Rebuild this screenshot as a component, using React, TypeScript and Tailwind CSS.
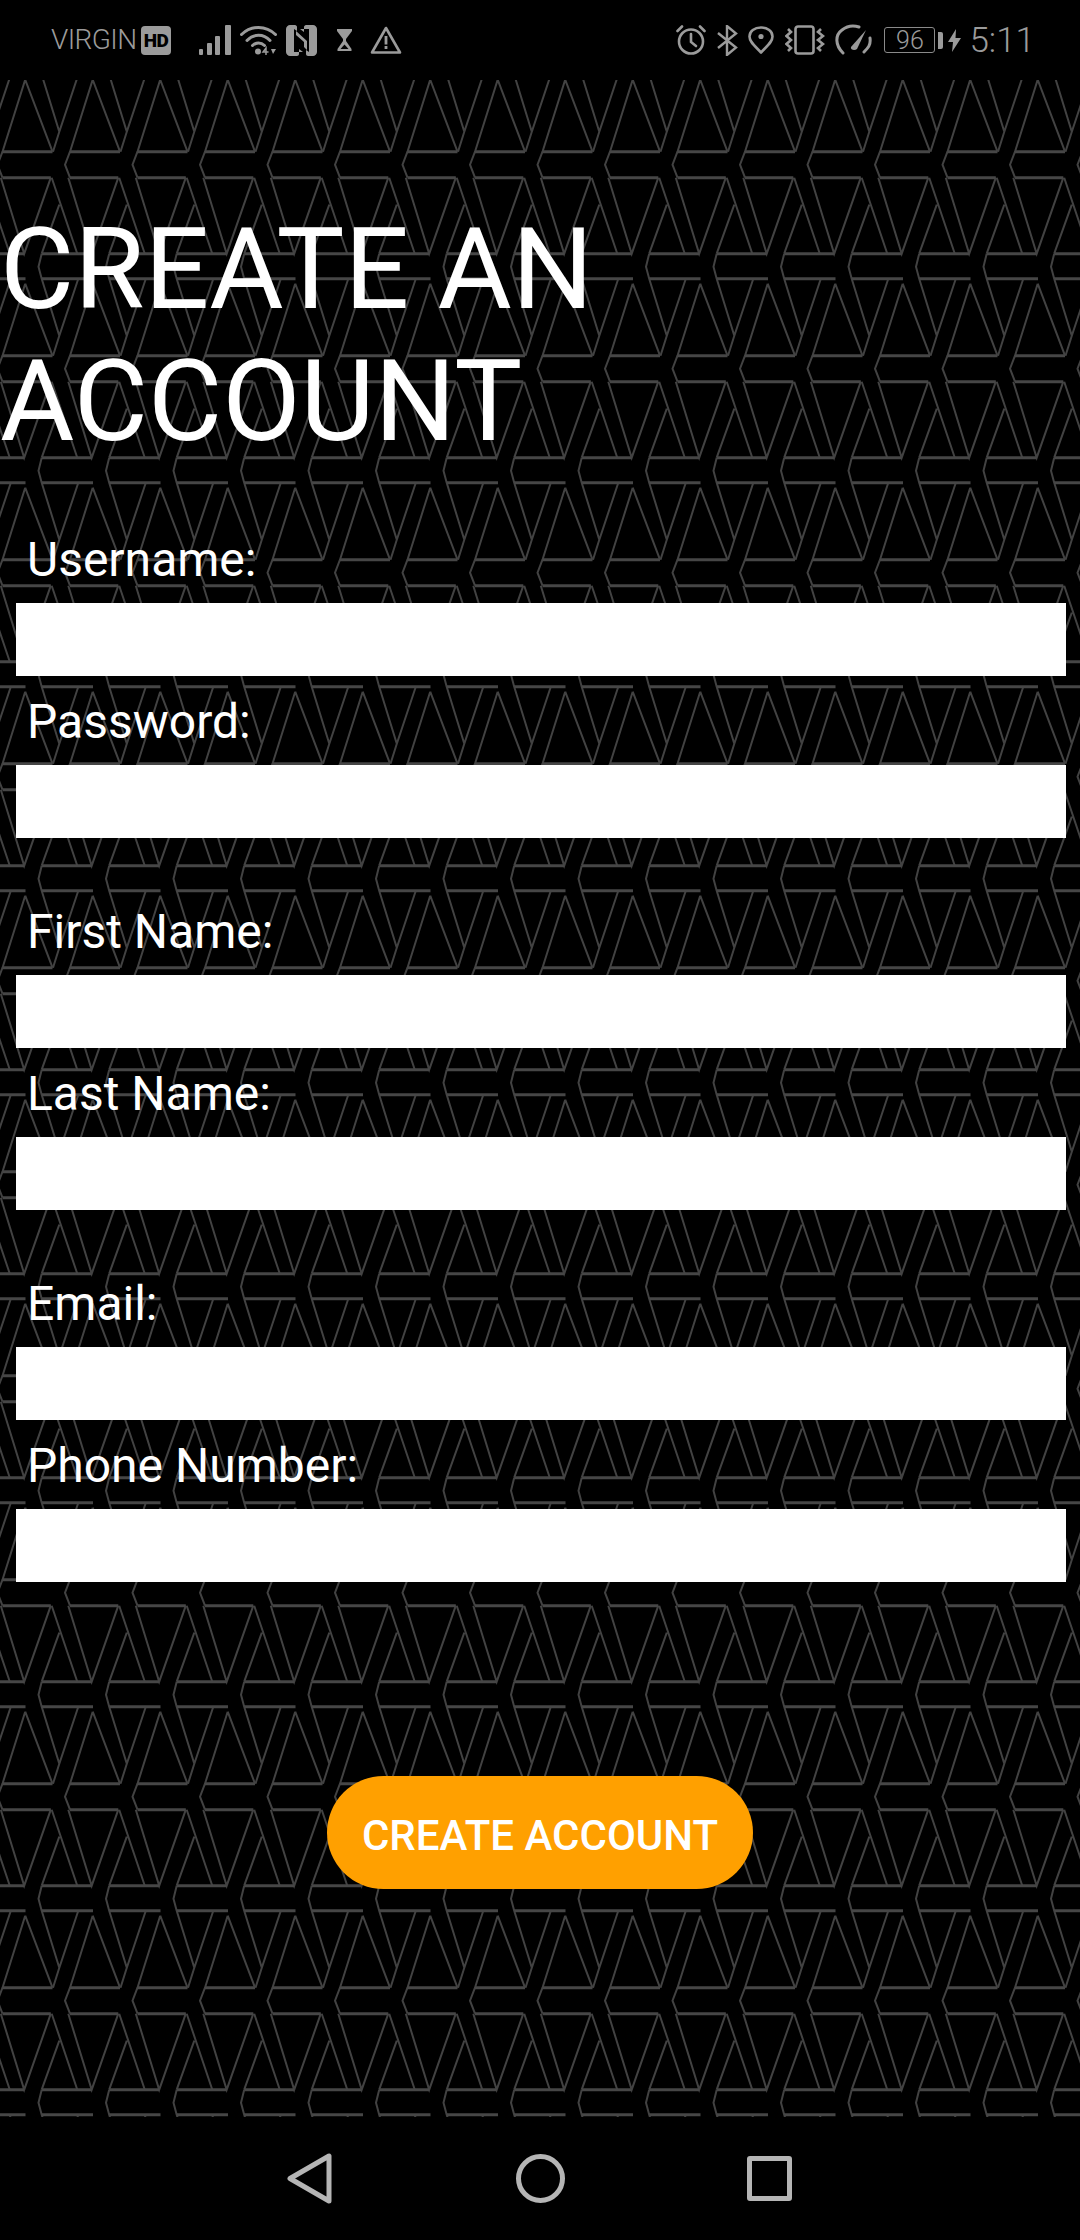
import React from 'react';

const gray = '#9b9b9b';

// one repeat of the background line pattern, measured off the screenshot
const tileLines = 'M41.7 0L38.5 13L41.7 25M41.7 25L59.3 82L78.3 25M59.3 82L53 102M92.7 30L70 102M92.7 30L120 102M70 102L65 115L70 128M68.3 128L91.7 204L118.3 128M51.7 128L77.3 204M59.3 155L41.7 204';
const tileBands = 'M41.7 0L91.7 0M41.7 25L93 25M70 102L120 102M70 128L118.3 128';

const tileCols = Array.from({ length: 19 }, (_, i) => (i - 2) * 67.5);
const tileRows = Array.from({ length: 12 }, (_, i) => 173.7 + (i - 1) * 204);

function Background() {
  return (
    <svg className="absolute inset-0 w-full h-full blur-[0.6px]" aria-hidden="true">
      {tileRows.map((y) =>
        tileCols.map((x) => (
          <g key={`${x}-${y}`} transform={`translate(${x} ${y})`} fill="none">
            <path d={tileLines} stroke="#424242" strokeWidth="2" />
            <path d={tileBands} stroke="#464646" strokeWidth="3" />
          </g>
        ))
      )}
    </svg>
  );
}

function StatusLeft() {
  return (
    <div className="flex items-center">
      <span className="ml-[51px] w-[86px] text-[28px] leading-none font-light text-[#9b9b9b] tracking-[-0.6px]">VIRGIN</span>
      {/* HD badge */}
      <div className="ml-[4px] w-[30px] h-[29px] rounded-[4px] bg-[#9b9b9b] flex items-center justify-center text-[19px] leading-none font-black text-black tracking-[-0.5px]">HD</div>
      {/* signal */}
      <svg className="ml-[28px]" width="33" height="30" viewBox="0 0 33 30" fill={gray}>
        <rect x="0" y="24" width="4" height="6" rx="1" />
        <rect x="8" y="18" width="5" height="12" rx="1" />
        <rect x="16" y="11" width="5" height="19" rx="1" />
        <rect x="26" y="0" width="6" height="30" rx="1" />
      </svg>
      {/* wifi */}
      <svg className="ml-[8px]" width="37" height="30" viewBox="0 0 37 30" fill="none" stroke={gray} strokeWidth="3" strokeLinecap="round">
        <path d="M1.5 9.5C11 0 26 0 35.5 9.5" />
        <path d="M7 15.5C13.5 8.5 23.5 8.5 30 15.5" />
        <path d="M12.5 20.5C16 17 21 17 24.5 20.5" />
        <circle cx="18" cy="26.5" r="3" fill={gray} stroke="none" />
        <path d="M26 29.5V23L23 27H28" strokeWidth="1.5" />
        <path d="M31 24L33 29L36 24Z" fill={gray} stroke="none" />
      </svg>
      {/* NFC */}
      <svg className="ml-[9px]" width="31" height="31" viewBox="0 0 31 31" fill={gray}>
        <path d="M4 0H9C10 0 11 1 11 2V6L8 4V27H17L13 24V29C13 30 12 31 11 31H4C2 31 0 29 0 27V4C0 2 2 0 4 0Z" />
        <path d="M27 31H22C21 31 20 30 20 29V25L23 27V4H14L18 7V2C18 1 19 0 20 0H27C29 0 31 2 31 4V27C31 29 29 31 27 31Z" />
        <path d="M10 6L21 16V25L18 22V17L10 10Z" />
      </svg>
      {/* hourglass */}
      <svg className="ml-[19px]" width="17" height="22" viewBox="0 0 17 22" fill={gray}>
        <path d="M1 0H16V2L10 10V12L15.5 20V22H1.5V20L7 12V10L1 2Z" />
        <path d="M4.5 20L8.5 15.5L12.5 20Z" fill="#000" />
      </svg>
      {/* warning */}
      <svg className="ml-[17px]" width="32" height="28" viewBox="0 0 32 28" fill="none">
        <path d="M16 2L30 26.5H2Z" stroke={gray} strokeWidth="2.6" strokeLinejoin="round" />
        <rect x="14.6" y="10" width="2.8" height="8.5" fill={gray} />
        <rect x="14.6" y="20" width="2.8" height="3" fill={gray} />
      </svg>
    </div>
  );
}

function StatusRight() {
  return (
    <div className="flex items-center">
      {/* alarm */}
      <svg width="30" height="30" viewBox="0 0 30 30" fill="none" stroke={gray} strokeWidth="2.6" strokeLinecap="round">
        <circle cx="15" cy="16.5" r="12" />
        <path d="M15 9V17L20 21" />
        <path d="M1.5 6L6 1.5M28.5 6L24 1.5" />
      </svg>
      {/* bluetooth */}
      <svg className="ml-[11px]" width="21" height="31" viewBox="0 0 21 31" fill="none" stroke={gray} strokeWidth="2.4">
        <path d="M1 8L19 22.5L10 30V1L19 8.5L1 23" />
      </svg>
      {/* location */}
      <svg className="ml-[10px]" width="26" height="28" viewBox="0 0 26 28" fill="none" stroke={gray} strokeWidth="2.6">
        <path d="M13 26.5C7 20 1.5 16 1.5 10.5C1.5 5 6.5 1.5 13 1.5C19.5 1.5 24.5 5 24.5 10.5C24.5 16 19 20 13 26.5Z" strokeLinejoin="round" />
        <circle cx="13" cy="10.5" r="2.6" fill={gray} stroke="none" />
      </svg>
      {/* vibrate */}
      <svg className="ml-[11px]" width="40" height="30" viewBox="0 0 40 30" fill="none" stroke={gray} strokeWidth="2.6">
        <rect x="10.5" y="1.5" width="18" height="27" rx="2.5" />
        <path d="M3 4L6 7L1.5 11L6 15L1.5 19L6 23L3 26" />
        <path d="M36 4L33 7L38 11L33 15L38 19L33 23L36 26" />
      </svg>
      {/* speedometer */}
      <svg className="ml-[10px]" width="37" height="32" viewBox="0 0 37 32" fill="none" stroke={gray} strokeWidth="3" strokeLinecap="round">
        <path d="M8 29C0 21 0 11 7 6C12 2 18 1 24 3" />
        <path d="M29 28C33 24 36 21 35 14" />
        <path d="M16 23L31 6L22 25C20 27 15 26 16 23Z" fill={gray} stroke="none" />
      </svg>
      {/* battery */}
      <div className="ml-[12px] w-[51px] h-[26px] border-[1.5px] border-[#8a8a8a] rounded-[3px] flex items-center justify-center text-[25px] leading-none font-light text-[#9b9b9b]">96</div>
      <div className="ml-[3px] w-[5px] h-[17px] rounded-r-[2px] bg-[#9b9b9b]" />
      {/* charging bolt */}
      <svg className="ml-[5px]" width="13" height="23" viewBox="0 0 13 23" fill={gray}>
        <path d="M8 0L0 13H5L4 23L13 9H7.5Z" />
      </svg>
      <span className="ml-[8px] mr-[45px] text-[35px] leading-none font-light text-[#9b9b9b]">5:11</span>
    </div>
  );
}

function Field({ label, className = '' }: { label: string; className?: string }) {
  return (
    <div className={className}>
      <label className="block h-[89px] pl-[27px] pt-[19px] text-[48px] leading-[54px] text-white">{label}</label>
      <input type="text" className="block w-[1050px] h-[73px] ml-[16px] bg-white" />
    </div>
  );
}

function NavBar() {
  return (
    <div className="h-[123px] bg-black flex items-center justify-center">
      <div className="w-[230px] flex justify-center pr-[2px]">
        <svg width="45" height="51" viewBox="0 0 45 51" fill="none" stroke="#b5b5b5" strokeWidth="5" strokeLinejoin="round">
          <path d="M42 3V48L3 25.5Z" />
        </svg>
      </div>
      <div className="w-[230px] flex justify-center">
        <div className="w-[49px] h-[49px] rounded-full border-[5px] border-[#b5b5b5]" />
      </div>
      <div className="w-[230px] flex justify-center pr-[2px]">
        <div className="w-[45px] h-[45px] rounded-[3px] border-[5px] border-[#b5b5b5]" />
      </div>
    </div>
  );
}

export default function App() {
  return (
    <div className="w-[1080px] h-[2240px] bg-black overflow-hidden font-['Roboto',sans-serif]">
      {/* Status bar */}
      <div className="relative z-10 h-[80px] bg-black flex items-center justify-between">
        <StatusLeft />
        <StatusRight />
      </div>

      {/* Form */}
      <div className="relative h-[2037px] bg-black">
        <Background />
        <div className="relative">
          <h1 className="pt-[123px] text-[114px] leading-[132px] font-normal text-white w-[700px]">CREATE AN ACCOUNT</h1>
          <Field label="Username:" className="mt-[47px]" />
          <Field label="Password:" />
          <Field label="First Name:" className="mt-[48px]" />
          <Field label="Last Name:" />
          <Field label="Email:" className="mt-[48px]" />
          <Field label="Phone Number:" />
          <div className="flex justify-center mt-[194px]">
            <button className="w-[426px] h-[113px] pt-[5px] rounded-full bg-[#ffa000] text-[42px] font-medium text-white">CREATE ACCOUNT</button>
          </div>
        </div>
      </div>

      <div className="relative z-10">
        <NavBar />
      </div>
    </div>
  );
}
